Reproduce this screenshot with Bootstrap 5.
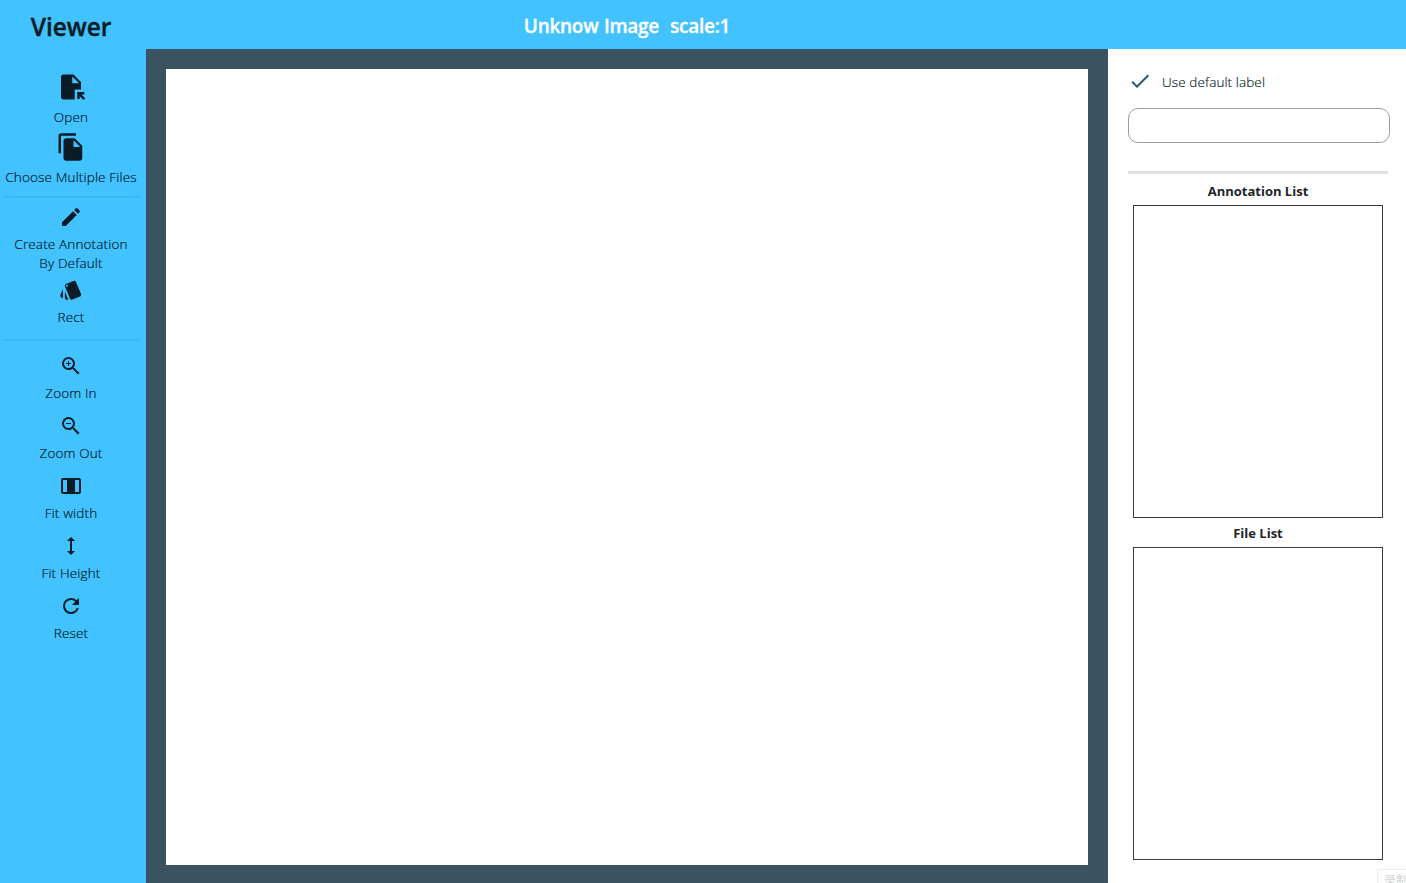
<!DOCTYPE html>
<html lang="en">
<head>
<meta charset="utf-8">
<meta name="viewport" content="width=device-width, initial-scale=1">
<title>Viewer</title>
<link href="https://cdn.jsdelivr.net/npm/bootstrap@5.3.0/dist/css/bootstrap.min.css" rel="stylesheet">
<style>
body{font-family:"Open Sans","Noto Sans","Noto Sans CJK SC",sans-serif;font-size:13px;line-height:19px;color:#212529}
.topbar{height:49px;background:#42c3ff}
.brand{width:142px;font-size:24.5px;font-weight:600;color:#0a1d26;line-height:49px;padding-top:2px;letter-spacing:-.1px;-webkit-text-stroke:.4px #0a1d26}
.doc-title{width:970px;font-size:19px;font-weight:600;line-height:49px;white-space:pre;padding-top:2px;letter-spacing:-.28px;word-spacing:.9px;-webkit-text-stroke:.3px #fff}
.sidebar{width:146px;background:#42c3ff;padding:23px 8px 0 4px;color:#001019}
.tool{background:none;border:0;padding:0;color:inherit;font-size:13.5px;font-weight:300;letter-spacing:.15px;white-space:nowrap;width:100%;-webkit-text-stroke:.15px #001019}
.tool svg{display:block;fill:#0a1d26;width:24px;height:24px;margin:0 auto 6px}
.tool svg.icon-lg{width:30px;height:30px}
.rule{height:2px;background:#3ab8f1;width:135px}
.stage{background:#3b5260;padding:20px 20px 18px}
.panel{width:298px;padding:23px 18px 23px 20px}
.default-label{color:#001a26;font-size:13.5px;font-weight:300;height:20px;letter-spacing:.1px;-webkit-text-stroke:.15px #001a26}
.default-label svg{margin:-2px 10px 0 0}
.label-input{height:35px;border:1px solid #999ca0;border-radius:10px;width:262px}
.divider{height:3px;width:260px;background:#e1e1e1}
.list-title{font-size:13px;font-weight:700;line-height:19px;width:260px}
.list-box{height:313px;width:250px;border:1px solid #343c48;margin-left:5px}
.recorder{right:0;bottom:0;width:29px;height:14px;border:1px solid #eee;border-width:1px 0 0 1px;color:#ccd0d4;font-size:12px;line-height:22px;padding-left:6px;white-space:nowrap}
</style>
<script src="https://cdn.jsdelivr.net/npm/bootstrap@5.3.0/dist/js/bootstrap.bundle.min.js"></script>
</head>
<body class="vh-100 overflow-hidden d-flex flex-column bg-white">
<header class="topbar d-flex flex-shrink-0">
  <div class="brand text-center">Viewer</div>
  <div class="doc-title text-center text-white">Unknow Image  scale:1</div>
</header>
<div class="d-flex flex-grow-1">
  <nav class="sidebar flex-shrink-0">
    <button class="tool d-block" style="margin-bottom:5px"><svg class="icon-lg" viewBox="0 0 24 24"><path d="M14,2H6C4.9,2,4.01,2.9,4.01,4L4,20c0,1.1,0.89,2,1.99,2H15v-8h5V8L14,2z M13,9V3.5L18.5,9H13z M17,21.66V16h5.66v2h-2.24l2.95,2.95l-1.41,1.41L19,19.41v2.25H17z"/></svg><span>Open</span></button>
    <button class="tool d-block" style="margin-bottom:9px"><svg class="icon-lg" viewBox="0 0 24 24"><path d="M16 1H4c-1.1 0-2 .9-2 2v14h2V3h12V1zm-1 4l6 6v10c0 1.1-.9 2-2 2H7.99C6.89 23 6 22.1 6 21V7c0-1.1.89-2 1.99-2H15zm-1 7h5.5L14 6.5V12z"/></svg><span>Choose Multiple Files</span></button>
    <div class="rule"></div>
    <button class="tool d-block" style="margin:7px 0 5px"><svg viewBox="0 0 24 24"><path d="M3 17.25V21h3.75L17.81 9.94l-3.75-3.75L3 17.25zM20.71 7.04a1 1 0 0 0 0-1.41l-2.34-2.34a1 1 0 0 0-1.41 0l-1.83 1.83 3.75 3.75 1.83-1.83z"/></svg><span>Create Annotation</span><br><span>By Default</span></button>
    <button class="tool d-block" style="margin-bottom:12px"><svg viewBox="0 0 24 24"><path d="M2.53 19.65l1.34.56v-9.03l-2.43 5.86c-.41 1.02.08 2.19 1.09 2.61zm19.5-3.7L17.07 3.98c-.31-.75-1.04-1.21-1.81-1.23-.26 0-.53.04-.79.15L7.1 5.95c-.75.31-1.21 1.03-1.23 1.8-.01.27.04.54.15.8l4.96 11.97c.31.76 1.05 1.22 1.83 1.23.26 0 .52-.05.77-.15l7.36-3.05c1.02-.42 1.51-1.59 1.09-2.6zM7.88 8.75c-.55 0-1-.45-1-1s.45-1 1-1 1 .45 1 1-.45 1-1 1zm-2 11c0 1.1.9 2 2 2h1.45l-3.45-8.34v6.34z"/></svg><span>Rect</span></button>
    <div class="rule"></div>
    <div class="d-grid" style="gap:11px;margin-top:13px">
      <button class="tool"><svg viewBox="0 0 24 24"><path d="M15.5 14h-.79l-.28-.27A6.47 6.47 0 0 0 16 9.5 6.5 6.5 0 1 0 9.5 16c1.61 0 3.09-.59 4.23-1.57l.27.28v.79l5 4.99L20.49 19l-4.99-5zm-6 0C7.01 14 5 11.99 5 9.5S7.01 5 9.5 5 14 7.01 14 9.5 11.99 14 9.5 14zM12 10h-2v2H9v-2H7V9h2V7h1v2h2v1z"/></svg><span>Zoom In</span></button>
      <button class="tool"><svg viewBox="0 0 24 24"><path d="M15.5 14h-.79l-.28-.27A6.47 6.47 0 0 0 16 9.5 6.5 6.5 0 1 0 9.5 16c1.61 0 3.09-.59 4.23-1.57l.27.28v.79l5 4.99L20.49 19l-4.99-5zm-6 0C7.01 14 5 11.99 5 9.5S7.01 5 9.5 5 14 7.01 14 9.5 11.99 14 9.5 14zM7 9h5v1H7z"/></svg><span>Zoom Out</span></button>
      <button class="tool"><svg viewBox="0 0 24 24"><path d="M20 4H4c-1.1 0-2 .9-2 2v12c0 1.1.9 2 2 2h16c1.1 0 2-.9 2-2V6c0-1.1-.9-2-2-2zM8 18H4V6h4v12zm12 0h-4V6h4v12z"/></svg><span>Fit width</span></button>
      <button class="tool"><svg viewBox="0 0 24 24"><path d="M13 6.99h3L12 3 8 6.99h3v10.02H8L12 21l4-3.99h-3z"/></svg><span>Fit Height</span></button>
      <button class="tool"><svg viewBox="0 0 24 24"><path d="M17.65 6.35A7.96 7.96 0 0 0 12 4a8 8 0 1 0 7.73 10h-2.08A6 6 0 1 1 12 6c1.66 0 3.14.69 4.22 1.78L13 11h7V4l-2.35 2.35z"/></svg><span>Reset</span></button>
    </div>
  </nav>
  <main class="stage flex-grow-1 d-flex"><div class="bg-white flex-grow-1"></div></main>
  <aside class="panel flex-shrink-0">
    <div class="default-label d-flex align-items-center"><svg width="24" height="24" viewBox="0 0 24 24" fill="#245873"><path d="M9 16.17L4.83 12l-1.42 1.41L9 19 21 7l-1.41-1.41z"/></svg><span>Use default label</span></div>
    <input class="label-input d-block" type="text" aria-label="Label" style="margin-top:16px">
    <div class="divider" style="margin-top:28px"></div>
    <h2 class="list-title text-center mb-0" style="padding-top:8px;height:31px">Annotation List</h2>
    <div class="list-box"></div>
    <h2 class="list-title text-center mb-0" style="padding-top:6px;height:29px">File List</h2>
    <div class="list-box"></div>
  </aside>
</div>
<div class="recorder position-absolute overflow-hidden bg-white">录制</div>
</body>
</html>
